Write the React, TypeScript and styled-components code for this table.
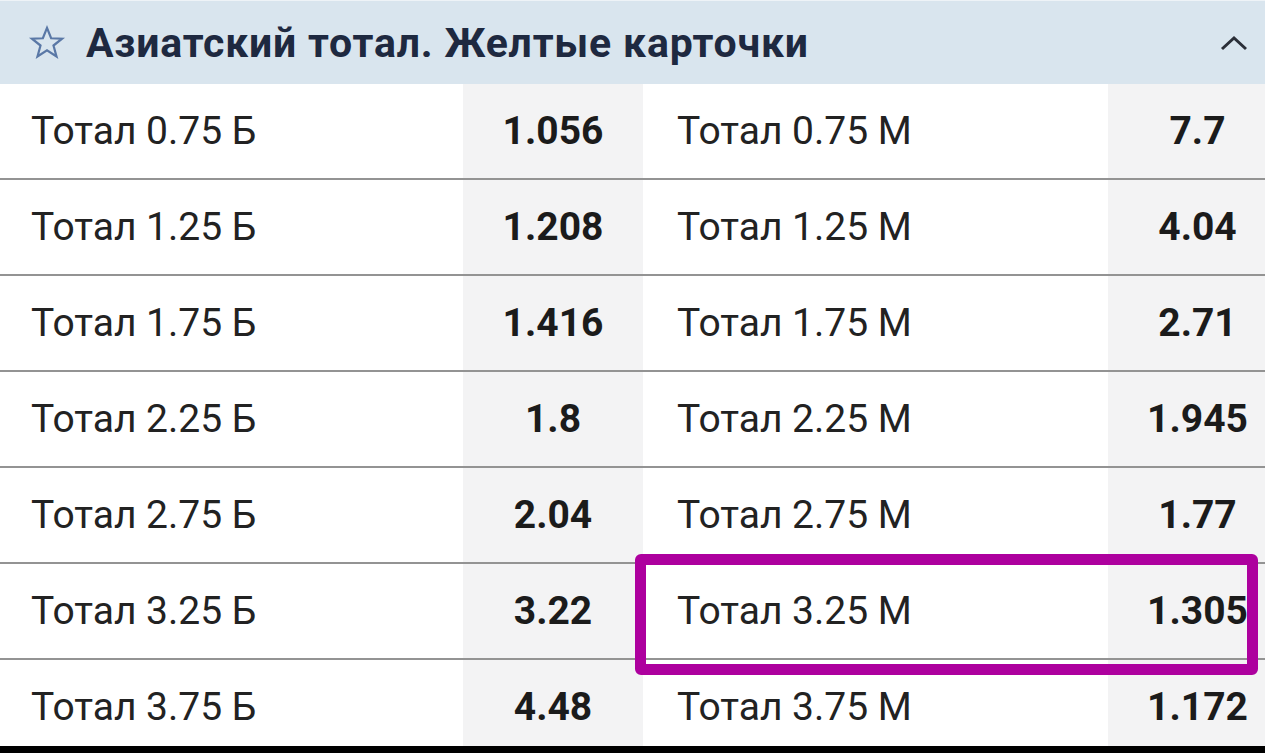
import styled, { createGlobalStyle } from "styled-components";

const GlobalStyle = createGlobalStyle`
	html, body {
		margin: 0;
		padding: 0;
		background: #ffffff;
		font-family: Roboto, "Liberation Sans", sans-serif;
	}
`;

const Container = styled.div`
	width: 1265px;
	height: 753px;
	display: flex;
	flex-direction: column;
	overflow: hidden;
	background: #ffffff;
`;

const Header = styled.div`
	height: 84px;
	flex-shrink: 0;
	display: flex;
	align-items: center;
	padding: 0 16px 0 28px;
	background: #d9e5ee;
	border-top: 1px solid #eef3f7;
	box-sizing: border-box;
`;

const StarIcon = styled.svg`
	width: 38px;
	height: 38px;
	margin-right: 20px;
	flex-shrink: 0;
`;

const Title = styled.div`
	flex-grow: 1;
	font-size: 41px;
	font-weight: 700;
	color: #1e2940;
	letter-spacing: 0.8px;
`;

const Chevron = styled.svg`
	width: 30px;
	height: 18px;
`;

const Table = styled.div`
	flex-grow: 1;
	overflow: hidden;
`;

const Row = styled.div`
	position: relative;
	display: grid;
	grid-template-columns: 463px 180px 465px 179px;
	height: 96px;
	border-bottom: 2px solid #939393;
	box-sizing: border-box;
`;

const Label = styled.div<{ $indent: number }>`
	display: flex;
	align-items: center;
	padding-left: ${(p) => p.$indent}px;
	font-size: 39px;
	color: #222222;
`;

const Odds = styled.div`
	display: flex;
	align-items: center;
	justify-content: center;
	background: #f3f3f4;
	font-size: 39px;
	font-weight: 700;
	color: #1b1b1b;
`;

const Highlight = styled.div`
	position: absolute;
	z-index: 2;
	left: 635px;
	top: -10px;
	width: 623px;
	height: 121px;
	border: 11px solid #ad009e;
	border-radius: 6px;
	box-sizing: border-box;
	pointer-events: none;
`;

const BottomBar = styled.div`
	height: 7px;
	flex-shrink: 0;
	background: #000000;
`;

const rows = [
	["0.75", "1.056", "7.7"],
	["1.25", "1.208", "4.04"],
	["1.75", "1.416", "2.71"],
	["2.25", "1.8", "1.945"],
	["2.75", "2.04", "1.77"],
	["3.25", "3.22", "1.305"],
	["3.75", "4.48", "1.172"],
];

const App = () => {
	return (
		<Container>
			<GlobalStyle />
			<Header>
				<StarIcon viewBox="0 0 24 24">
					<polygon
						points="12,2.5 14.6,9 21.5,9.3 16.1,13.6 18,20.5 12,16.6 6,20.5 7.9,13.6 2.5,9.3 9.4,9"
						fill="none"
						stroke="#5a78a6"
						strokeWidth="1.4"
					/>
				</StarIcon>
				<Title>Азиатский тотал. Желтые карточки</Title>
				<Chevron viewBox="0 0 30 18">
					<polyline points="3,15 15,4 27,15" fill="none" stroke="#2b2f38" strokeWidth="3" />
				</Chevron>
			</Header>
			<Table>
				{rows.map(([total, over, under], i) => (
					<Row key={total}>
						<Label $indent={31}>Тотал {total} Б</Label>
						<Odds>{over}</Odds>
						<Label $indent={34}>Тотал {total} М</Label>
						<Odds>{under}</Odds>
						{i === 5 && <Highlight />}
					</Row>
				))}
			</Table>
			<BottomBar />
		</Container>
	);
};

export default App;
